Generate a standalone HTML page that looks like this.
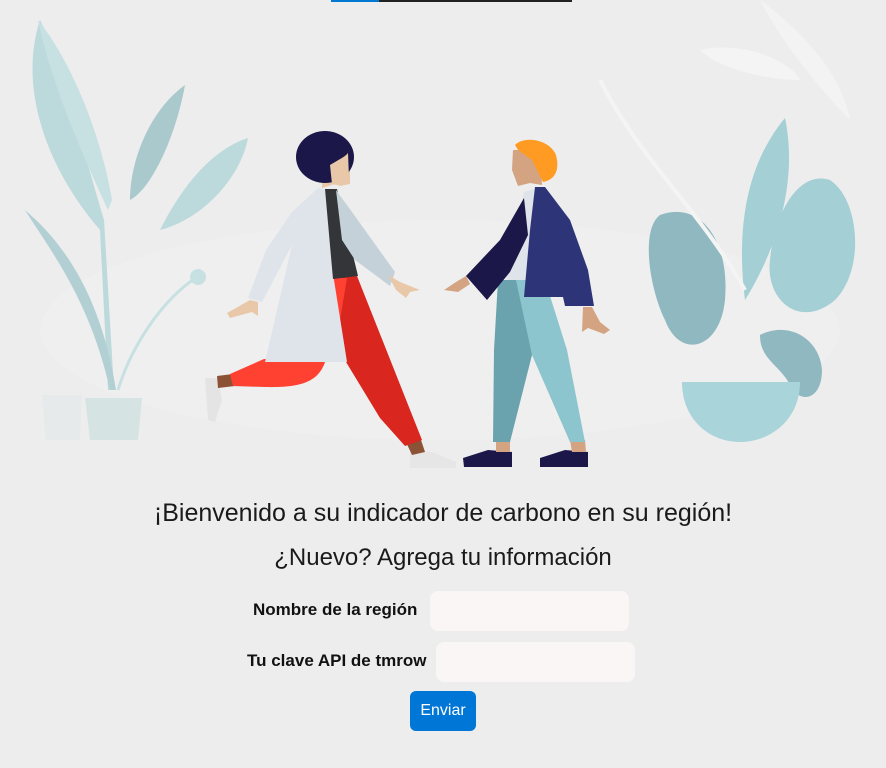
<!DOCTYPE html>
<html><head><meta charset="utf-8"><style>
*{margin:0;padding:0;box-sizing:border-box}
body{width:886px;height:768px;background:#ededed;font-family:"Liberation Sans","DejaVu Sans",sans-serif;position:relative;overflow:hidden;color:#1a1a1a}
.t{position:absolute;left:0;width:886px;text-align:center}
.lbl{position:absolute;font-weight:bold;font-size:17px;color:#111}
.in{position:absolute;background:#f9f6f5;border-radius:8px;width:199px;height:40px}
.btn{position:absolute;left:410px;top:691px;width:66px;height:40px;background:#0076d6;border-radius:6px;color:#fff;font-size:16px;text-align:center;line-height:40px}
</style></head><body>
<div style="position:absolute;left:331px;top:0;width:48px;height:2px;background:#0078d4"></div>
<div style="position:absolute;left:379px;top:0;width:193px;height:2px;background:#222"></div>
<svg width="886" height="480" style="position:absolute;left:0;top:0">
<ellipse cx="440" cy="330" rx="400" ry="110" fill="#efefef"/>
<path d="M40 20 C20 80 40 160 100 230 L108 390 L114 390 L104 220 C80 140 60 60 40 20Z" fill="#bcd9dc"/>
<path d="M38 20 C70 60 100 130 112 200 L108 210 C80 150 50 80 38 20Z" fill="#c7e0e2"/>
<path d="M185 85 C150 110 130 160 130 200 C150 190 175 140 185 85Z" fill="#a9c9cd"/>
<path d="M248 138 C210 150 180 190 160 230 C200 220 240 180 248 138Z" fill="#bcd9dc"/>
<path d="M25 210 C50 250 90 300 110 390 L116 390 C100 290 60 240 25 210Z" fill="#b2d0d4"/>
<path d="M200 275 C160 300 130 350 118 390" stroke="#c7e0e2" stroke-width="3" fill="none"/>
<circle cx="198" cy="277" r="8" fill="#c7e0e2"/>
<path d="M85 398 L142 398 L138 440 L90 440Z" fill="#d6e3e3"/>
<path d="M42 395 L82 395 L80 440 L46 440Z" fill="#e7eaea"/>
<path d="M785 118 C750 160 735 220 745 300 C770 260 800 190 785 118Z" fill="#a3cfd5"/>
<path d="M830 180 C800 170 775 210 770 260 C765 300 800 330 835 300 C865 270 860 200 830 180Z" fill="#a3cfd5"/>
<path d="M660 215 C700 200 730 240 725 300 C720 350 680 360 665 320 C650 290 640 230 660 215Z" fill="#8fb8c0"/>
<path d="M760 335 C790 320 820 340 822 370 C822 400 800 405 790 385 C780 365 760 360 760 335Z" fill="#8fb8c0"/>
<path d="M682 382 L800 382 C800 420 770 442 740 442 C710 442 682 420 682 382Z" fill="#a9d4d9"/>
<path d="M600 80 C640 160 700 210 745 290" stroke="#f4f4f4" stroke-width="4" fill="none"/>
<path d="M700 50 C740 40 790 60 800 80 C770 80 720 70 700 50Z" fill="#f4f4f4"/>
<path d="M760 0 C800 30 840 70 850 120 C820 90 780 40 760 0Z" fill="#f3f3f3"/>
<path d="M205 378 L218 378 L222 400 L215 422 L208 420Z" fill="#e4e4e4"/>
<path d="M217 376 L233 374 L235 386 L218 388Z" fill="#8c5236"/>
<path d="M264 359 L326 359 C320 380 305 388 265 387 L233 386 L230 374Z" fill="#ff4131"/>
<path d="M410 450 L432 452 L456 462 L456 468 L410 468Z" fill="#e6e6e6"/>
<path d="M405 440 L420 437 L425 452 L412 455Z" fill="#8c5236"/>
<path d="M333 278 L357 276 L422 440 L405 446 L380 418 L346 362 L338 320Z" fill="#d9261f"/>
<path d="M333 278 L347 278 L340 320 L338 330Z" fill="#ff4131"/>
<path d="M318 188 L292 212 L266 250 L248 298 L262 302 L292 245 L265 362 L347 362 L334 280 L325 190Z" fill="#dfe3ea"/>
<path d="M325 189 L337 189 L358 276 L333 279Z" fill="#333538"/>
<path d="M336 190 L352 212 L395 272 L390 286 L355 260 L342 240Z" fill="#c5d1d8"/>
<path d="M388 275 L400 282 L420 290 L410 292 L406 298 L396 290Z" fill="#e9c8a9"/>
<path d="M250 300 L258 302 L258 316 L252 312 L230 318 L227 313Z" fill="#e9c8a9"/>
<path d="M322 160 L350 155 L350 184 L340 186 L335 184 L322 188Z" fill="#e9c8a9"/>
<ellipse cx="325" cy="157" rx="29" ry="26" fill="#1b1849"/>
<path d="M330 165 C338 160 345 157 348 153 L349 178 C346 185 338 186 332 184Z" fill="#e9c8a9"/>
<path d="M463 458 L488 450 L512 452 L512 467 L464 467Z" fill="#1b1849"/>
<path d="M540 458 L565 450 L588 452 L588 467 L540 467Z" fill="#1b1849"/>
<path d="M496 440 L510 440 L510 452 L496 452Z" fill="#d4a381"/>
<path d="M570 440 L585 440 L586 452 L572 452Z" fill="#d4a381"/>
<path d="M508 280 L545 280 L567 350 L585 442 L570 442 L532 355Z" fill="#8cc5cd"/>
<path d="M498 280 L516 280 L532 355 L510 442 L493 442 L494 350Z" fill="#6aa3ae"/>
<path d="M524 192 L535 189 L533 280 L506 280Z" fill="#dfe3ea"/>
<path d="M535 187 L545 187 L570 220 L588 270 L594 306 L565 306 L563 297 L524 297 L530 230Z" fill="#2e3478"/>
<path d="M524 198 L528 235 L510 272 L487 300 L466 276 L500 240Z" fill="#1b1849"/>
<path d="M466 276 L470 284 L458 292 L444 290 L456 282Z" fill="#d4a381"/>
<path d="M583 307 L592 307 L600 322 L610 330 L604 334 L588 328 L582 332Z" fill="#d4a381"/>
<path d="M513 150 L540 150 L542 185 L530 183 L518 186 L512 170Z" fill="#d4a381"/>
<path d="M515 145 C525 135 550 140 556 155 C560 170 555 180 543 182 L532 160 L518 150Z" fill="#ff9a22"/>
</svg>
<div class="t" style="top:499px;font-size:25px">¡Bienvenido a su indicador de carbono en su región!</div>
<div class="t" style="top:544px;font-size:24px">¿Nuevo? Agrega tu información</div>
<div class="lbl" style="left:253px;top:600px">Nombre de la región</div>
<div class="in" style="left:430px;top:591px"></div>
<div class="lbl" style="left:247px;top:651px">Tu clave API de tmrow</div>
<div class="in" style="left:436px;top:642px"></div>
<div class="btn">Enviar</div>
</body></html>
